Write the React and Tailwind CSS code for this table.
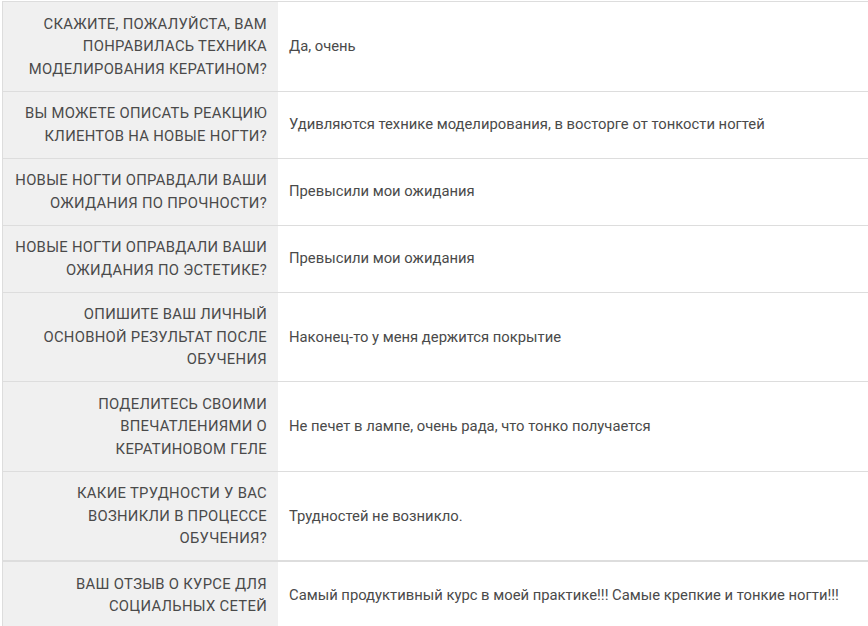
import React from "react";

const rows = [
  {
    q: ["СКАЖИТЕ, ПОЖАЛУЙСТА, ВАМ", "ПОНРАВИЛАСЬ ТЕХНИКА", "МОДЕЛИРОВАНИЯ КЕРАТИНОМ?"],
    a: "Да, очень",
  },
  {
    q: ["ВЫ МОЖЕТЕ ОПИСАТЬ РЕАКЦИЮ", "КЛИЕНТОВ НА НОВЫЕ НОГТИ?"],
    a: "Удивляются технике моделирования, в восторге от тонкости ногтей",
  },
  {
    q: ["НОВЫЕ НОГТИ ОПРАВДАЛИ ВАШИ", "ОЖИДАНИЯ ПО ПРОЧНОСТИ?"],
    a: "Превысили мои ожидания",
  },
  {
    q: ["НОВЫЕ НОГТИ ОПРАВДАЛИ ВАШИ", "ОЖИДАНИЯ ПО ЭСТЕТИКЕ?"],
    a: "Превысили мои ожидания",
  },
  {
    q: ["ОПИШИТЕ ВАШ ЛИЧНЫЙ", "ОСНОВНОЙ РЕЗУЛЬТАТ ПОСЛЕ", "ОБУЧЕНИЯ"],
    a: "Наконец-то у меня держится покрытие",
  },
  {
    q: ["ПОДЕЛИТЕСЬ СВОИМИ", "ВПЕЧАТЛЕНИЯМИ О", "КЕРАТИНОВОМ ГЕЛЕ"],
    a: "Не печет в лампе, очень рада, что тонко получается",
  },
  {
    q: ["КАКИЕ ТРУДНОСТИ У ВАС", "ВОЗНИКЛИ В ПРОЦЕССЕ", "ОБУЧЕНИЯ?"],
    a: "Трудностей не возникло.",
  },
];

const last = {
  q: ["ВАШ ОТЗЫВ О КУРСЕ ДЛЯ", "СОЦИАЛЬНЫХ СЕТЕЙ"],
  a: "Самый продуктивный курс в моей практике!!! Самые крепкие и тонкие ногти!!!",
};

function Row({ q, a, thick }) {
  return (
    <div className={`flex ${thick ? "border-t-2" : "border-t"} border-[#dddddd]`}>
      <div className="w-[275px] shrink-0 bg-[#f0f0f0] py-[10.5px] pl-[8px] pr-[11px] text-right tracking-[0.3px] flex flex-col justify-center">
        {q.map((line, i) => (
          <span key={i} className="whitespace-nowrap">{line}</span>
        ))}
      </div>
      <div className="flex-1 flex items-center py-[10.5px] pl-[11px] pr-[10px]">
        {a}
      </div>
    </div>
  );
}

export default function App() {
  return (
    <div className="w-[868px] h-[626px] overflow-hidden bg-white font-['Roboto',sans-serif] text-[14.8px] leading-[22.5px] text-[#4a4a4a] pt-[1px] pl-[2px]">
      <div className="border-l border-b border-[#dddddd]">
        {rows.map((r, i) => (
          <Row key={i} q={r.q} a={r.a} />
        ))}
        <Row q={last.q} a={last.a} thick />
      </div>
    </div>
  );
}
